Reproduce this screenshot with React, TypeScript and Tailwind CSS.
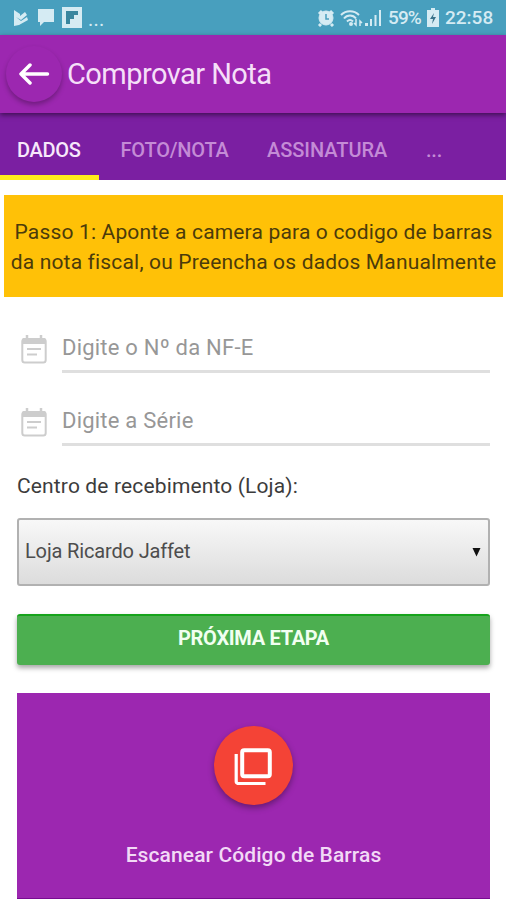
import React from 'react';

const fields = ['Digite o Nº da NF-E', 'Digite a Série'];

function StatusBar() {
  return (
    <div className="h-[35px] bg-[#489fbe] flex items-center justify-between pl-[13px] pr-[12px] text-[#d5ebf3]">
      <div className="flex items-center">
        <svg className="w-[16px] h-[18px]" viewBox="0 0 16 18" fill="currentColor">
          <path d="M1 1l6 4v2l5-4 2 3-6 5-5-3 5 4 6-4 1 3-9 5-5 1z" />
        </svg>
        <svg className="w-[18px] h-[19px] ml-[8px]" viewBox="0 0 18 19" fill="currentColor">
          <path d="M1 1h16v13H7l-4 4v-4H1z" />
        </svg>
        <svg className="w-[20px] h-[21px] ml-[7px]" viewBox="0 0 20 21">
          <path d="M0 0h20v21H0z" fill="currentColor" />
          <path d="M4 4h12v4h-4v4H8v5H4z" fill="#39869f" />
        </svg>
        <span className="text-[20px] leading-[20px] ml-[6px] mt-[3px] tracking-[0.2px]">...</span>
      </div>
      <div className="flex items-center text-[19px] leading-[20px] font-medium">
        <svg className="w-[18px] h-[18px]" viewBox="0 0 18 18" fill="none" stroke="currentColor">
          <path d="M2 5l3-3M16 5l-3-3M4 15l-2 2M14 15l2 2" strokeWidth="3" />
          <circle cx="9" cy="9" r="7" fill="currentColor" />
          <path d="M9 5v5h3" stroke="#489fbe" strokeWidth="1.5" />
        </svg>
        <svg className="w-[23px] h-[18px] ml-[5px]" viewBox="0 0 23 18" fill="none" stroke="currentColor" strokeWidth="2">
          <path d="M1 6c5-5 13-5 18 0M4 9.500c3-4 9-4 12 0M7 12.500c2-2 4-2 6 0" />
          <circle cx="11" cy="15" r="2" fill="currentColor" stroke="none" />
          <path d="M16 10v6l-2-2M20 17v-5l2 2" strokeWidth="1.500" />
        </svg>
        <svg className="w-[18px] h-[18px] ml-[1px]" viewBox="0 0 18 18" fill="currentColor">
          <path d="M1 14h3v3H1zM6 10h2v7H6zM10.500 6h2v11h-2zM15 1h2v16h-2z" />
        </svg>
        <span className="ml-[6px] w-[36px] tracking-[-0.9px]">59%</span>
        <svg className="w-[12px] h-[19px] ml-[3px]" viewBox="0 0 12 19">
          <path d="M4 0h4v2h4v17H0V2h4z" fill="currentColor" />
          <path d="M7 5L3 11h3l-1 5 4-7H6z" fill="#39728a" />
        </svg>
        <span className="ml-[6px] w-[49px]">22:58</span>
      </div>
    </div>
  );
}

function NoteIcon() {
  return (
    <svg className="w-[26px] h-[29px] shrink-0" viewBox="0 0 26 29" fill="none" stroke="#cdcdcd" strokeWidth="2">
      <path d="M6 0v5M20 0v5" strokeWidth="2.500" />
      <rect x="1.300" y="4" width="23.400" height="23.500" rx="2.500" />
      <path d="M3 3h20a2 2 0 0 1 2 2v4H1V5a2 2 0 0 1 2-2z" fill="#cdcdcd" stroke="none" />
      <path d="M6 14h14M6 19.500h10" />
    </svg>
  );
}

export default function App() {
  return (
    <div className="w-[506px] h-[900px] overflow-hidden bg-white font-[Roboto,sans-serif]">
      <StatusBar />

      {/* Header */}
      <header className="relative z-10 h-[78px] bg-[#9c27b0] flex items-center pl-[6px] shadow-[0_2px_5px_rgba(0,0,0,0.5)]">
        <button className="w-[56px] h-[56px] rounded-full flex items-center justify-center shadow-[0_3px_5px_rgba(0,0,0,0.28)]">
          <svg className="w-[32px] h-[22px]" viewBox="0 0 32 22" fill="none" stroke="white" strokeWidth="3.500" strokeLinecap="round" strokeLinejoin="round">
            <path d="M29.500 11H3M12 2L3 11l9 9" />
          </svg>
        </button>
        <h1 className="ml-[5px] text-[29px] leading-[34px] tracking-[-0.55px] text-[#f5dff8]">Comprovar Nota</h1>
      </header>

      {/* Tabs */}
      <nav className="h-[67px] bg-[#7b1fa2] flex text-[20px] leading-[67px] pt-[4px] font-medium tracking-[-0.2px] text-[#c48bd6]">
        <div className="w-[99px] h-[63px] pl-[17px] leading-[67px] tracking-[-0.3px] text-[#f7e8fb] border-b-[5px] border-[#ffeb1b]">DADOS</div>
        <span className="ml-[21.500px] w-[109px]">FOTO/NOTA</span>
        <span className="ml-[37.500px] w-[122px] tracking-[-0.05px]">ASSINATURA</span>
        <span className="ml-[37px]">...</span>
      </nav>

      <div className="mt-[15px] mx-[4px] mr-[3px] h-[102px] bg-[#ffc107] pt-[22px] text-center text-[21px] leading-[30px] tracking-[0.17px] text-[#4b3b0b] whitespace-nowrap">
        <p>Passo 1: Aponte a camera para o codigo de barras</p>
        <p>da nota fiscal, ou Preencha os dados Manualmente</p>
      </div>

      <main className="pl-[17px] pr-[16px]">
        {/* Form fields */}
        <div className="pt-[25px]">
          {fields.map((label) => (
            <div key={label} className="h-[73px] flex items-start pl-[4px]">
              <div className="pt-[13px]"><NoteIcon /></div>
              <div className="ml-[15px] flex-1 h-[51px] border-b-[3px] border-[#dfdfdf] text-[22px] leading-[52px] tracking-[0.22px] text-[#979797]">{label}</div>
            </div>
          ))}
        </div>

        <p className="mt-[3px] text-[21px] leading-[30px] tracking-[0.14px] text-[#3c3c3c]">Centro de recebimento (Loja):</p>
        <div className="mt-[17px] h-[68px] border-2 border-[#b1b1b1] rounded-[3px] bg-linear-to-b from-[#f8f8f8] to-[#dcdcdc] flex items-center justify-between pl-[6px] pr-[7px] text-[20px] tracking-[-0.15px] text-[#4d4d4d]">
          <span className="pb-[2px]">Loja Ricardo Jaffet</span>
          <svg className="w-[9px] h-[9px]" viewBox="0 0 9 9"><path d="M0.500 0h8L4.500 8.500z" fill="#111" /></svg>
        </div>

        <button className="mt-[28px] w-full h-[51px] rounded-[3px] bg-[#4caf50] border-t-2 border-[#16a31b] pb-[4px] text-[20px] leading-[45px] tracking-[-0.3px] font-bold text-[#f1fff1] shadow-[0_3px_5px_rgba(0,0,0,0.35)]">PRÓXIMA ETAPA</button>

        {/* Barcode scanner */}
        <section className="mt-[28px] h-[206px] bg-[#9c27b0] border-b border-[#780b91] flex flex-col items-center pt-[33px]">
          <button className="w-[79px] h-[79px] rounded-full bg-[#f44336] flex items-center justify-center shadow-[0_3px_6px_rgba(0,0,0,0.35)]">
            <svg className="w-[38px] h-[38px] mr-[1px]" viewBox="0 0 38 38" fill="none" stroke="white" strokeWidth="4">
              <rect x="8.200" y="3.200" width="27.600" height="26" rx="2" />
              <path d="M2.200 7v27.500a2 2 0 0 0 2 2h27.300" strokeWidth="3.200" />
            </svg>
          </button>
          <p className="mt-[35px] text-[21px] leading-[30px] tracking-[0.1px] font-medium text-[#f2d9f6]">Escanear Código de Barras</p>
        </section>
      </main>
    </div>
  );
}
